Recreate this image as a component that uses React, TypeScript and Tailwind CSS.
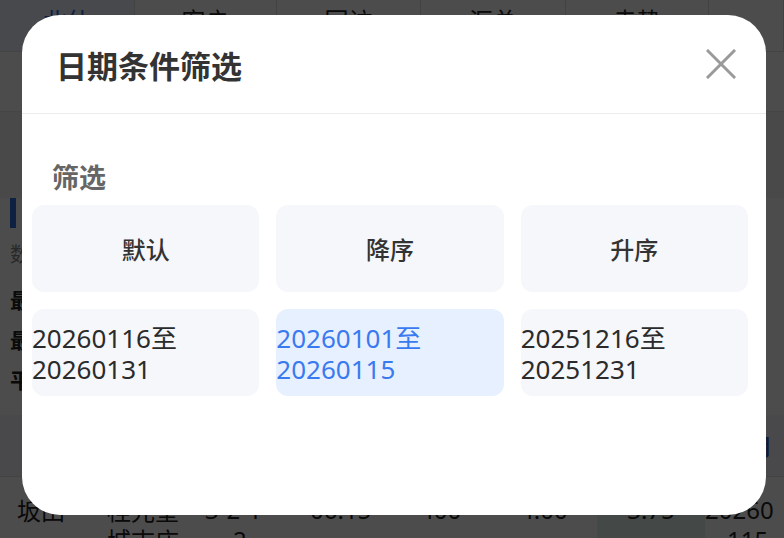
import React from "react";

const CJK = { fontFamily: '"Noto Sans CJK SC", "Noto Sans", sans-serif' };
const NUM = { fontFamily: '"Noto Sans", "Noto Sans CJK SC", sans-serif' };

function Tabs() {
  const tabs = ["北仙", "客户", "回访", "汇总", "走势", ""];
  const widths = ["w-[135px]", "w-[142px]", "w-[144px]", "w-[145px]", "w-[143px]", "flex-1"];
  return (
    <div className="flex h-[52px] border-b border-[#e3e3e3]">
      {tabs.map((t, i) => (
        <div
          key={i}
          className={`${widths[i]} flex justify-center pt-[4px] leading-[32px] border-r border-[#dcdcdc] text-[24px] ${
            i === 0 ? "bg-[#eef4ff] text-[#2f6fe0] border-[#9db8e8]" : "text-[#222]"
          }`}
        >
          {t}
        </div>
      ))}
    </div>
  );
}

function Background() {
  return (
    <div className="flex flex-col text-[#222]" style={CJK}>
      <Tabs />
      <div className="h-[60px] border-b border-[#e8e8e8] flex items-center justify-center text-[20px]">
        2026年01月
      </div>
      <div className="h-[86px] bg-[#f4f4f4]" />
      <div className="flex flex-col pl-[10px]">
        <div className="flex items-center gap-[10px] h-[30px]">
          <div className="w-[6px] h-[30px] bg-[#2f6fe0]" />
          <div className="text-[22px] font-bold">数据概况</div>
        </div>
        <div className="h-[52px] flex items-center text-[20px] text-[#888]">数据说明</div>
        <div className="h-[40px] flex items-center text-[21px] font-bold">最高价格</div>
        <div className="h-[40px] flex items-center text-[21px] font-bold">最低价格</div>
        <div className="h-[40px] flex items-center text-[21px] font-bold">平均价格</div>
      </div>
      <div className="h-[15px]" />
      <div className="h-[62px] bg-[#f3f6fa] border-b border-[#e2e2e2] flex items-center justify-between pl-[30px] pr-[14px] text-[22px] font-bold">
        <span>片区</span>
        <span className="text-[#2f5fb8]">日期</span>
      </div>
      <div className="grid grid-cols-[90px_98px_105px_110px_100px_77px_108px_1fr] pl-[17px] text-[24px] leading-[30px] pt-[18px]">
        <div>坂田</div>
        <div className="flex flex-col">
          <span>桂光望</span>
          <span>城志庄</span>
        </div>
        <div className="flex flex-col" style={NUM}>
          <span>3-2-1</span>
          <span className="pl-[28px]">2</span>
        </div>
        <div style={NUM}>06:15</div>
        <div style={NUM}>400</div>
        <div style={NUM}>4.00</div>
        <div className="bg-[#e3f3ee] text-center" style={NUM}>3.75</div>
        <div className="flex flex-col" style={NUM}>
          <span>20260</span>
          <span className="pl-[22px]">115</span>
        </div>
      </div>
    </div>
  );
}

function CloseIcon() {
  return (
    <svg width="30" height="30" viewBox="0 0 30 30" fill="none">
      <path d="M2 2 L28 28 M28 2 L2 28" stroke="#9a9a9a" strokeWidth="3" strokeLinecap="square" />
    </svg>
  );
}

export default function App() {
  const ranges = [
    { a: "20260116至", b: "20260131", active: false },
    { a: "20260101至", b: "20260115", active: true },
    { a: "20251216至", b: "20251231", active: false },
  ];
  return (
    <div className="relative w-[784px] h-[538px] overflow-hidden bg-white">
      <Background />
      <div className="absolute inset-0 bg-black/70" />
      <div
        className="absolute left-[22px] top-[15px] w-[744px] h-[500px] rounded-[38px] bg-white flex flex-col"
        style={CJK}
      >
        <div className="h-[99px] shrink-0 flex items-center justify-between pl-[34px] pr-[30px] border-b border-[#ececec]">
          <div className="text-[31px] font-bold text-[#333] leading-none">日期条件筛选</div>
          <CloseIcon />
        </div>
        <div className="pt-[45px] flex flex-col">
          <div className="pl-[30px] h-[36px] leading-[36px] text-[27px] font-semibold text-[#666]">筛选</div>
          <div className="mt-[10px] pl-[10px] pr-[18px] grid grid-cols-3 gap-x-[17px] gap-y-[17px]">
            {["默认", "降序", "升序"].map((t) => (
              <div
                key={t}
                className="h-[87px] rounded-[12px] bg-[#f5f7fa] flex items-center justify-center text-[24px] font-medium text-[#333]"
              >
                {t}
              </div>
            ))}
            {ranges.map((r) => (
              <div
                key={r.a}
                className={`h-[87px] rounded-[12px] flex flex-col justify-center text-[26px] leading-[31px] ${
                  r.active ? "bg-[#e7f0ff] text-[#3a7af0]" : "bg-[#f5f7fa] text-[#2b2b2b]"
                }`}
                style={NUM}
              >
                <span>
                  {r.a.slice(0, 8)}
                  <span style={CJK}>{r.a.slice(8)}</span>
                </span>
                <span>{r.b}</span>
              </div>
            ))}
          </div>
        </div>
      </div>
    </div>
  );
}
